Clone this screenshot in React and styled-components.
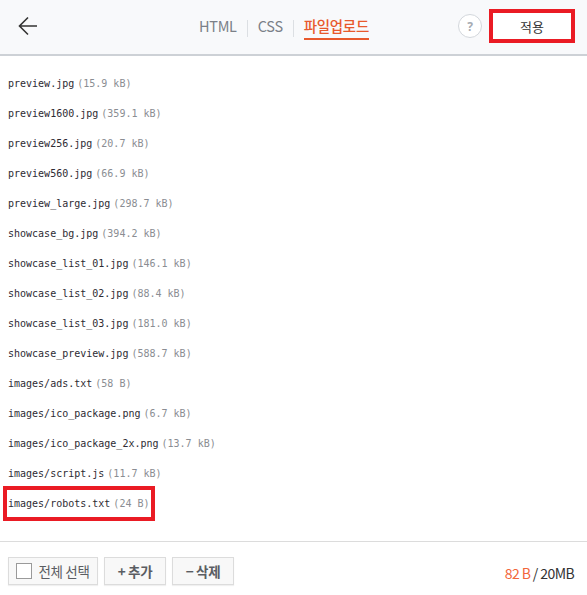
import styled, { createGlobalStyle } from "styled-components";

const GlobalStyle = createGlobalStyle`
  * { box-sizing: border-box; }
  body {
    margin: 0;
    background: #fff;
    font-family: "Noto Sans CJK KR", "Noto Sans", sans-serif;
  }
`;

const files = [
  { name: "preview.jpg", size: "15.9 kB" },
  { name: "preview1600.jpg", size: "359.1 kB" },
  { name: "preview256.jpg", size: "20.7 kB" },
  { name: "preview560.jpg", size: "66.9 kB" },
  { name: "preview_large.jpg", size: "298.7 kB" },
  { name: "showcase_bg.jpg", size: "394.2 kB" },
  { name: "showcase_list_01.jpg", size: "146.1 kB" },
  { name: "showcase_list_02.jpg", size: "88.4 kB" },
  { name: "showcase_list_03.jpg", size: "181.0 kB" },
  { name: "showcase_preview.jpg", size: "588.7 kB" },
  { name: "images/ads.txt", size: "58 B" },
  { name: "images/ico_package.png", size: "6.7 kB" },
  { name: "images/ico_package_2x.png", size: "13.7 kB" },
  { name: "images/script.js", size: "11.7 kB" },
  { name: "images/robots.txt", size: "24 B", marked: true },
];

const Page = styled.div`
  width: 587px;
  height: 595px;
  display: flex;
  flex-direction: column;
`;

const Header = styled.header`
  height: 56px;
  flex-shrink: 0;
  display: flex;
  align-items: center;
  padding: 0 12px 2px 18px;
  background: #f8f9fb;
  border-bottom: 2px solid #cdd1d6;
`;

const BackButton = styled.button`
  width: 20px;
  height: 22px;
  padding: 0;
  border: none;
  background: none;
  color: #333;
  display: flex;
  align-items: center;
  cursor: pointer;
`;

const Tabs = styled.nav`
  display: flex;
  align-items: center;
  margin-left: 161px;
`;

const Tab = styled.a`
  font-size: 14.5px;
  letter-spacing: -0.3px;
  line-height: 20px;
  color: ${(p) => (p.$active ? "#e8592d" : "#7b8088")};
  font-weight: ${(p) => (p.$active ? 500 : 400)};
  padding-bottom: 2px;
  margin-top: 4px;
  border-bottom: 2px solid ${(p) => (p.$active ? "#e8592d" : "transparent")};
`;

const Divider = styled.span`
  width: 1px;
  height: 17px;
  margin: 4px 10px 0;
  background: #dcdfe3;
`;

const Actions = styled.div`
  margin-left: auto;
  display: flex;
  align-items: center;
  gap: 7px;
`;

const HelpButton = styled.button`
  width: 24px;
  height: 24px;
  border-radius: 50%;
  border: 1.5px solid #d3d7dc;
  background: #fff;
  color: #a6abb2;
  font-size: 12px;
  font-weight: 700;
  padding: 0;
  display: flex;
  align-items: center;
  justify-content: center;
  font-family: "Noto Sans", sans-serif;
`;

const ApplyButton = styled.button`
  width: 86px;
  height: 34px;
  border: 4.5px solid #ea1b24;
  background: #fff;
  color: #333;
  font-size: 13px;
  font-family: "Noto Sans CJK KR", sans-serif;
  padding: 0;
`;

const List = styled.ul`
  flex: 1;
  list-style: none;
  margin: 0;
  padding: 12px 0 0 8px;
`;

const Row = styled.li`
  height: 30px;
  display: flex;
  align-items: center;
`;

const Item = styled.span`
  height: 25px;
  display: inline-flex;
  align-items: center;
  font-family: "DejaVu Sans Mono", "Liberation Mono", monospace;
  font-size: 10px;
  outline: ${(p) => (p.$marked ? "4px solid #ea1b24" : "none")};
  outline-offset: 1px;
`;

const FileName = styled.span`
  color: #2e2b33;
`;

const FileSize = styled.span`
  color: #8a8d92;
  margin-left: 3px;
`;

const Footer = styled.footer`
  height: 54px;
  flex-shrink: 0;
  border-top: 1px solid #dcdcdc;
  display: flex;
  align-items: center;
  padding: 4px 13px 0 8px;
  gap: 6px;
`;

const FooterButton = styled.button`
  height: 28px;
  width: ${(p) => p.$width || 62}px;
  display: flex;
  align-items: center;
  justify-content: center;
  gap: 6px;
  padding: 0;
  border: 1px solid #dcdcdc;
  background: #f8f8f8;
  box-shadow: 0 1px 1px rgba(0, 0, 0, 0.06);
  color: #5a5d62;
  font-size: 13.5px;
  font-weight: ${(p) => (p.$bold ? 700 : 400)};
  font-family: "Noto Sans CJK KR", sans-serif;
  letter-spacing: -0.3px;
`;

const Checkbox = styled.span`
  width: 16px;
  height: 16px;
  border: 1px solid #9a9a9a;
  background: #fff;
`;

const Usage = styled.div`
  margin-left: auto;
  font-size: 14px;
  letter-spacing: -0.6px;
  color: #333;
  padding-top: 4px;
  font-family: "Noto Sans CJK KR", sans-serif;
`;

const Used = styled.span`
  color: #f2663a;
`;

export default function App() {
  return (
    <Page>
      <GlobalStyle />
      <Header>
        <BackButton aria-label="back">
          <svg width="20" height="20" viewBox="0 0 20 20" fill="none" stroke="#333" strokeWidth="1.6">
            <path d="M19 10H1.5M10 1.5L1.5 10L10 18.5" />
          </svg>
        </BackButton>
        <Tabs>
          <Tab>HTML</Tab>
          <Divider />
          <Tab>CSS</Tab>
          <Divider />
          <Tab $active>파일업로드</Tab>
        </Tabs>
        <Actions>
          <HelpButton>?</HelpButton>
          <ApplyButton>적용</ApplyButton>
        </Actions>
      </Header>
      <List>
        {files.map((f) => (
          <Row key={f.name}>
            <Item $marked={f.marked}>
              <FileName>{f.name}</FileName>
              <FileSize>({f.size})</FileSize>
            </Item>
          </Row>
        ))}
      </List>
      <Footer>
        <FooterButton $width={90}>
          <Checkbox />
          전체 선택
        </FooterButton>
        <FooterButton $bold>+ 추가</FooterButton>
        <FooterButton $bold>− 삭제</FooterButton>
        <Usage>
          <Used>82 B</Used> / 20MB
        </Usage>
      </Footer>
    </Page>
  );
}
